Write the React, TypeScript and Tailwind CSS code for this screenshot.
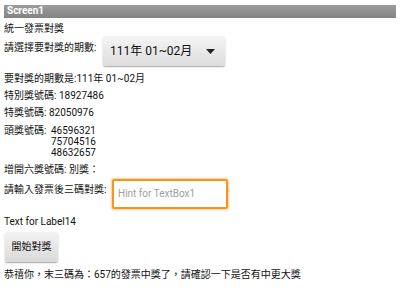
import React from "react";

const F = { fontFamily: '"Roboto", "Noto Sans CJK TC", sans-serif' };

export default function App() {
  return (
    <div className="w-[400px] h-[300px] bg-white text-[#111] overflow-hidden" style={F}>
      <div className="mx-[4px] mt-[5px] h-[13px] bg-gradient-to-b from-[#9c9c9c] to-[#838383] text-white text-[10px] font-bold leading-[11px] pl-[3px]">
        Screen1
      </div>
      <div className="pl-[4px] text-[10px] leading-[12px]">
        <div className="mt-[5px] h-[12px]">統一發票對獎</div>
        <div className="flex items-start mt-[1px] h-[30px]">
          <div className="mt-[5.5px] w-[99px] shrink-0">請選擇要對獎的期數:</div>
          <div className="w-[122px] h-[30px] rounded-[2px] bg-gradient-to-b from-[#f5f5f5] to-[#dcdcdc] shadow-[0_1px_1.5px_rgba(0,0,0,0.35)] flex items-center justify-between pl-[7px] pr-[10px] text-[12px] leading-[14px] whitespace-nowrap">
            <span>111年 01~02月</span>
            <svg width="9" height="5" viewBox="0 0 9 5"><path d="M0 0H9L4.5 5Z" fill="#222" /></svg>
          </div>
        </div>
        <div className="mt-[7px] h-[12px]">要對獎的期數是:111年 01~02月</div>
        <div className="mt-[5px] h-[12px]">特別獎號碼: 18927486</div>
        <div className="mt-[4.5px] h-[12px]">特獎號碼: 82050976</div>
        <div className="flex mt-[6.5px] leading-[11px]">
          <div className="w-[47px] shrink-0">頭獎號碼:</div>
          <div>
            <div>46596321</div>
            <div>75704516</div>
            <div>48632657</div>
          </div>
        </div>
        <div className="mt-[5.5px] h-[12px]">增開六獎號碼: 別獎：</div>
        <div className="flex items-start mt-[3.5px] h-[30px]">
          <div className="mt-[4.5px] w-[108px] shrink-0">請輸入發票後三碼對獎:</div>
          <div className="w-[116px] h-[30px] border-[2px] border-[#f7941d] rounded-[2px] shadow-[0_0_2px_1px_rgba(247,148,29,0.45)] flex items-center pl-[4px] text-[10px] text-[#9e9e9e]">
            Hint for TextBox1
          </div>
        </div>
        <div className="mt-[7px] h-[12px]">Text for Label14</div>
        <div className="mt-[4px] ml-[1px] w-[53px] h-[30px] rounded-[2px] bg-gradient-to-b from-[#f3f3f3] to-[#d9d9d9] shadow-[0_1px_1.5px_rgba(0,0,0,0.35)] flex items-center justify-center text-[10px]">
          開始對獎
        </div>
        <div className="mt-[6.5px] h-[12px] whitespace-nowrap">恭禧你，末三碼為：657的發票中獎了，請確認一下是否有中更大獎</div>
      </div>
    </div>
  );
}
